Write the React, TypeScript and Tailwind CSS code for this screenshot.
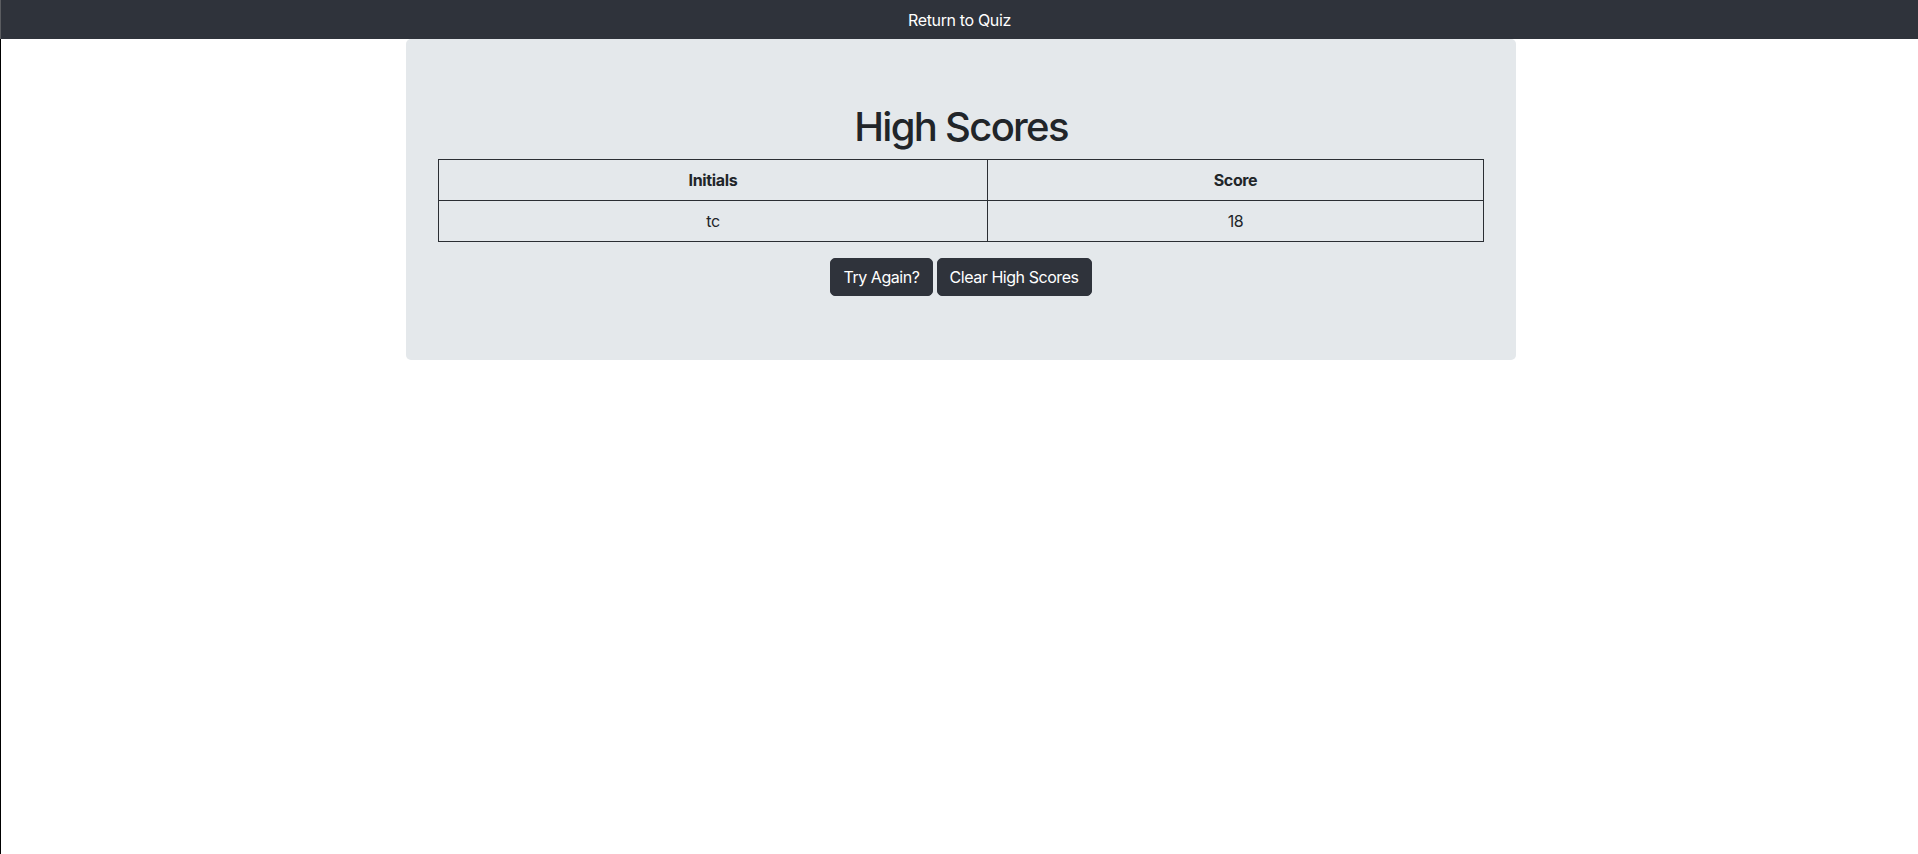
import React from "react";

export default function App() {
  return (
    <div className="min-h-screen bg-white font-['Inter','Liberation_Sans',sans-serif] text-[#212529] tracking-[-0.35px]">
      <nav className="h-[39px] bg-[#2f333b] border-l border-[#5a5c60] flex items-center justify-center text-white text-base leading-6">
        Return to Quiz
      </nav>
      <div className="border-l border-black min-h-[815px] flex justify-center pl-[3px]">
        <div className="w-[1110px] h-fit bg-[#e4e8eb] rounded-[5px] px-8 py-16 text-center">
          <h1 className="text-[40px] leading-[48px] font-medium mb-2 tracking-[-1.7px]">High Scores</h1>
          <table className="w-full border-collapse border border-[#2a2e33] mb-4 text-base leading-6">
            <thead>
              <tr>
                <th className="w-[549px] border border-[#2a2e33] px-2 py-2 font-bold">Initials</th>
                <th className="border border-[#2a2e33] px-2 py-2 font-bold">Score</th>
              </tr>
            </thead>
            <tbody>
              <tr>
                <td className="border border-[#2a2e33] px-2 py-2">tc</td>
                <td className="border border-[#2a2e33] px-2 py-2">18</td>
              </tr>
            </tbody>
          </table>
          <div className="flex justify-center gap-[4px]">
            <button className="px-3 py-1.5 border border-[#2f333b] bg-[#2f333b] text-white text-base leading-6 rounded-[5px] tracking-[-0.45px]">
              Try Again?
            </button>
            <button className="px-3 py-1.5 border border-[#2f333b] bg-[#2f333b] text-white text-base leading-6 rounded-[5px] tracking-[-0.45px]">
              Clear High Scores
            </button>
          </div>
        </div>
      </div>
    </div>
  );
}
